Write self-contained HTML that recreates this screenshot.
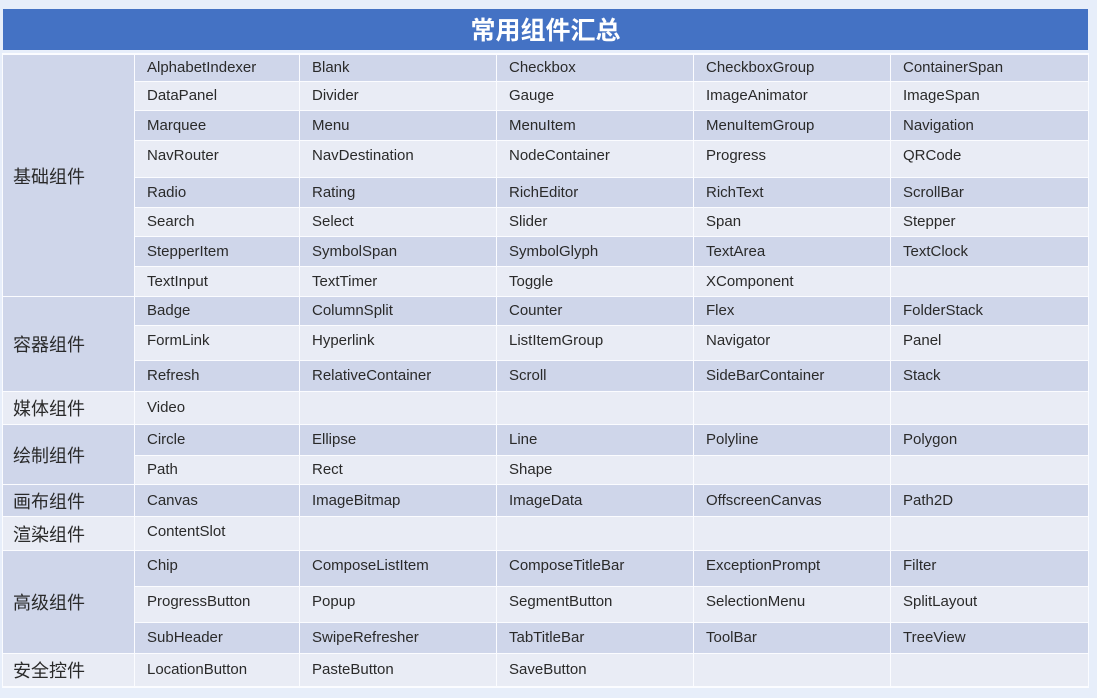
<!DOCTYPE html>
<html><head><meta charset="utf-8"><style>
body{margin:0;width:1097px;height:698px;background:#e7eefa;position:relative;overflow:hidden;font-family:"Liberation Sans","Noto Sans CJK SC",sans-serif;color:#2a2a2a}
.h{position:absolute;left:3px;top:9px;width:1085px;height:41px;background:#4472c4;color:#fff;font-size:25px;font-weight:bold;text-align:center;line-height:41px;font-family:"Noto Sans CJK SC",sans-serif}
.w{position:absolute;left:2px;top:53px;width:1087px;height:635px;background:#fbfcff}
.c{position:absolute;box-sizing:border-box;font-size:15px;padding-left:12px;line-height:24px}
.k{position:absolute;box-sizing:border-box;font-size:18px;padding-left:10px;display:flex;align-items:center;font-family:"Noto Sans CJK SC",sans-serif}
.d{background:#cfd6ea}.l{background:#e9ecf5}
</style></head><body>
<div class="h">常用组件汇总</div>
<div class="w"></div>
<div id="t"></div>
<script>
const X=[135,300,497,694,891,1089];
const R=[[55,82,'d',["AlphabetIndexer","Blank","Checkbox","CheckboxGroup","ContainerSpan"]],
[82,111,'l',["DataPanel","Divider","Gauge","ImageAnimator","ImageSpan"]],
[111,141,'d',["Marquee","Menu","MenuItem","MenuItemGroup","Navigation"]],
[141,178,'l',["NavRouter","NavDestination","NodeContainer","Progress","QRCode"]],
[178,208,'d',["Radio","Rating","RichEditor","RichText","ScrollBar"]],
[208,237,'l',["Search","Select","Slider","Span","Stepper"]],
[237,267,'d',["StepperItem","SymbolSpan","SymbolGlyph","TextArea","TextClock"]],
[267,297,'l',["TextInput","TextTimer","Toggle","XComponent",""]],
[297,326,'d',["Badge","ColumnSplit","Counter","Flex","FolderStack"]],
[326,361,'l',["FormLink","Hyperlink","ListItemGroup","Navigator","Panel"]],
[361,392,'d',["Refresh","RelativeContainer","Scroll","SideBarContainer","Stack"]],
[392,425,'l',["Video","","","",""]],
[425,456,'d',["Circle","Ellipse","Line","Polyline","Polygon"]],
[456,485,'l',["Path","Rect","Shape","",""]],
[485,517,'d',["Canvas","ImageBitmap","ImageData","OffscreenCanvas","Path2D"]],
[517,551,'l',["ContentSlot","","","",""]],
[551,587,'d',["Chip","ComposeListItem","ComposeTitleBar","ExceptionPrompt","Filter"]],
[587,623,'l',["ProgressButton","Popup","SegmentButton","SelectionMenu","SplitLayout"]],
[623,654,'d',["SubHeader","SwipeRefresher","TabTitleBar","ToolBar","TreeView"]],
[654,687,'l',["LocationButton","PasteButton","SaveButton","",""]]];
const K=[[55,297,'d','基础组件'],[297,392,'d','容器组件'],[392,425,'l','媒体组件'],[425,485,'d','绘制组件'],[485,517,'d','画布组件'],[517,551,'l','渲染组件'],[551,654,'d','高级组件'],[654,687,'l','安全控件']];
let h='';
for(const [a,b,c,t] of K)h+=`<div class="k ${c}" style="left:3px;top:${a}px;width:131px;height:${b-a-1}px">${t}</div>`;
for(const [a,b,c,v] of R){const H=b-a-1;const p=H>32?3:(H-24)/2;for(let i=0;i<5;i++)h+=`<div class="c ${c}" style="left:${X[i]}px;top:${a}px;width:${X[i+1]-X[i]-1}px;height:${H}px;padding-top:${p}px">${v[i]}</div>`;}
document.getElementById('t').innerHTML=h;
</script>
</body></html>
